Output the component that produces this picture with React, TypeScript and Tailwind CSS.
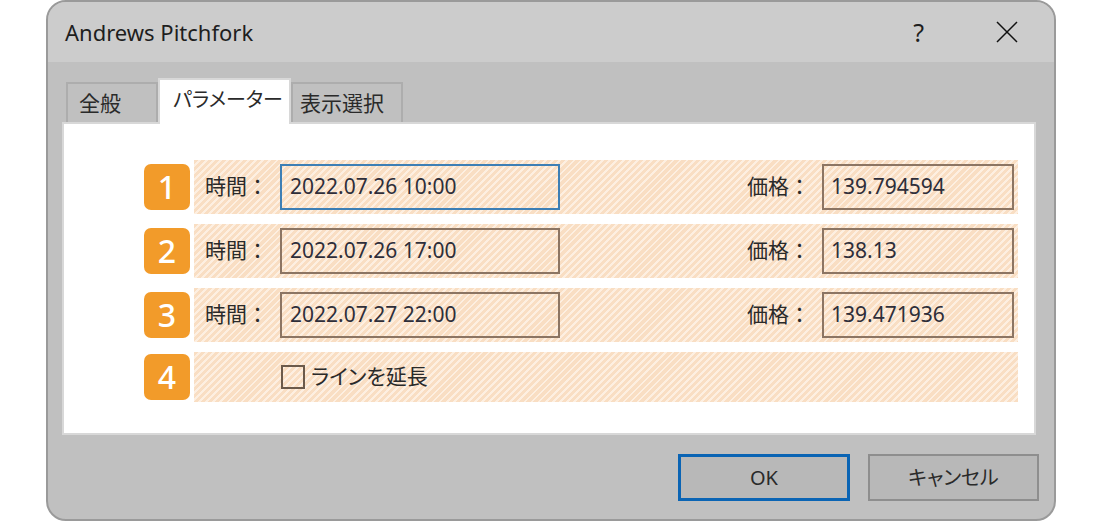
import React from 'react';

const stripe =
  'bg-[repeating-linear-gradient(135deg,#f9dec3_0px,#f9dec3_3px,#fdefe1_3px,#fdefe1_5px)]';

function Badge({ n }: { n: number }) {
  return (
    <div className="w-[46px] h-[46px] shrink-0 rounded-[7px] bg-[#f29b2a] flex items-center justify-center text-white text-[32px] font-medium leading-none">
      {n}
    </div>
  );
}

interface RowProps {
  n: number;
  time: string;
  price: string;
  focused?: boolean;
}

function ParamRow({ n, time, price, focused }: RowProps) {
  return (
    <div className="flex items-center gap-[4px] h-[54px]">
      <Badge n={n} />
      <div className={`flex items-center w-[824px] h-full pl-[11px] pr-[4px] ${stripe}`}>
        <span className="w-[75px] text-[21px] text-[#2a2a2a] [font-feature-settings:normal]">時間：</span>
        <div
          className={`w-[280px] h-[46px] border-2 flex items-center pl-[8px] text-[21px] text-[#2e2e3a] ${
            focused ? 'border-[#3d7fb5]' : 'border-[#8c7563]'
          }`}
        >
          {time}
        </div>
        <div className="flex-1" />
        <span className="text-[21px] text-[#2a2a2a] mr-[12px] [font-feature-settings:normal]">価格：</span>
        <div className="w-[192px] h-[46px] border-2 border-[#8c7563] flex items-center pl-[7px] text-[21px] text-[#2e2e3a]">
          {price}
        </div>
      </div>
    </div>
  );
}

export default function App() {
  return (
    <div className="w-[1100px] h-[522px] bg-white font-['Noto_Sans','Noto_Sans_CJK_JP',sans-serif] [font-feature-settings:'palt']">
      <div className="ml-[46px] w-[1010px] h-[521px] rounded-[20px] border-2 border-[#9a9a9a] overflow-hidden flex flex-col bg-[#c0c0c0]">
        {/* Title bar */}
        <div className="h-[60px] shrink-0 bg-[#cccccc] flex items-center pl-[17px] pr-[34px]">
          <span className="text-[22px] text-[#1e1e1e]">Andrews Pitchfork</span>
          <div className="flex-1" />
          <span className="text-[25px] text-[#1e1e1e] mr-[72px] leading-none">?</span>
          <svg width="22" height="22" viewBox="0 0 22 22" className="mr-[2px]">
            <path d="M1 1 L21 21 M21 1 L1 21" stroke="#111" strokeWidth="1.5" fill="none" />
          </svg>
        </div>

        {/* Body */}
        <div className="flex-1 flex flex-col pl-[14px] pr-[18px]">
          {/* Tabs */}
          <div className="h-[60px] flex items-end pl-[4px]">
            <div className="w-[92px] h-[40px] border-2 border-b-0 border-[#adadad] flex items-center pl-[11px] pt-[2px] text-[21px] text-[#2a2a2a]">
              全般
            </div>
            <div className="relative z-10 w-[133px] h-[46px] -mb-[2px] bg-white border-2 border-b-0 border-[#d8d8d8] flex items-start pt-[5px] pl-[13px] text-[20px] text-[#2a2a2a]">
              パラメーター
            </div>
            <div className="w-[112px] h-[40px] border-2 border-b-0 border-[#adadad] flex items-center pl-[7px] pt-[2px] text-[21px] text-[#2a2a2a]">
              表示選択
            </div>
          </div>

          {/* Panel */}
          <div className="h-[313px] bg-white border-2 border-[#d8d8d8] pt-[36px] pl-[80px] flex flex-col gap-[10px]">
            <ParamRow n={1} time="2022.07.26 10:00" price="139.794594" focused />
            <ParamRow n={2} time="2022.07.26 17:00" price="138.13" />
            <ParamRow n={3} time="2022.07.27 22:00" price="139.471936" />
            <div className="flex items-center gap-[4px] h-[50px]">
              <Badge n={4} />
              <div className={`flex items-center w-[824px] h-full pl-[87px] ${stripe}`}>
                <div className="w-[24px] h-[24px] border-2 border-[#6b5a4b]" />
                <span className="ml-[6px] text-[21px] text-[#2a2a2a]">ラインを延長</span>
              </div>
            </div>
          </div>

          {/* Buttons */}
          <div className="flex justify-end gap-[18px] mt-[19px] mr-[-3px]">
            <button className="w-[172px] h-[47px] border-[3px] border-[#0a64b4] bg-[#b8b8b8] text-[20px] text-[#2a2a2a]">
              OK
            </button>
            <button className="w-[171px] h-[47px] border-2 border-[#8e8e8e] bg-[#b8b8b8] text-[20px] text-[#2a2a2a]">
              キャンセル
            </button>
          </div>
        </div>
      </div>
    </div>
  );
}
